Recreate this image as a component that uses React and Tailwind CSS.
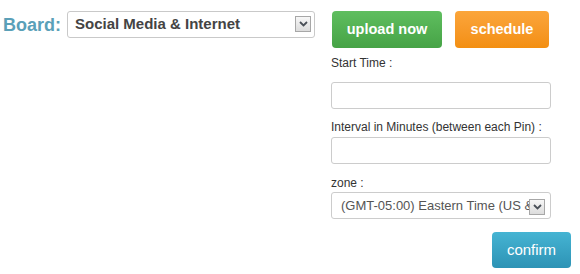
import React from "react";

function DropBox({ className = "" }) {
  return (
    <div
      className={
        "flex h-[16px] w-[16px] shrink-0 items-center justify-center border border-[#a7a7a7] bg-gradient-to-b from-[#f7f7f7] to-[#dcdcdc] " +
        className
      }
    >
      <svg width="9" height="6" viewBox="0 0 9 6">
        <polyline points="1,1 4.5,4.5 8,1" fill="none" stroke="#4a5058" strokeWidth="1.8" />
      </svg>
    </div>
  );
}

export default function App() {
  return (
    <div
      className="flex h-[274px] w-[580px] bg-white pt-[11px]"
      style={{ fontFamily: '"Liberation Sans", Arial, sans-serif' }}
    >
      <div className="flex h-[27px] items-center pl-[3px]">
        <span className="text-[18px] font-bold leading-none text-[#5aa0b8]">Board:</span>
        <div className="ml-[6px] flex h-[27px] w-[248px] items-center justify-between rounded-[3px] border border-[#c9c9c9] pl-[7px] pr-[3px]">
          <span className="text-[15px] font-bold text-[#444]">Social Media &amp; Internet</span>
          <DropBox className="-mt-[2px]" />
        </div>
      </div>
      <div className="ml-[16px] flex w-[240px] flex-col">
        <div className="flex h-[37px] gap-[13px] pl-[1px]">
          <div className="flex w-[110px] items-center justify-center rounded-[4px] bg-gradient-to-b from-[#5fbe5f] to-[#46a346] text-[14.5px] font-bold text-white">
            upload now
          </div>
          <div className="flex w-[94px] items-center justify-center rounded-[4px] bg-gradient-to-b from-[#fba53a] to-[#f38f10] text-[14.5px] font-bold text-white">
            schedule
          </div>
        </div>
        <div className="mt-[8px] h-[15px] text-[12px] leading-[15px] text-[#333]">Start Time :</div>
        <div className="mt-[11px] h-[27px] w-[220px] rounded-[3px] border border-[#cccccc] bg-white"></div>
        <div className="mt-[11px] h-[15px] text-[12px] leading-[15px] text-[#333]">
          Interval in Minutes (between each Pin) :
        </div>
        <div className="mt-[2px] h-[27px] w-[220px] rounded-[3px] border border-[#cccccc] bg-white"></div>
        <div className="mt-[12px] h-[15px] text-[12px] leading-[15px] text-[#333]">zone :</div>
        <div className="mt-[1px] flex h-[27px] w-[220px] items-center rounded-[3px] border border-[#cccccc] bg-white pl-[9px] pr-[5px]">
          <div className="flex-1 overflow-hidden whitespace-nowrap text-[13px] text-[#555]">
            (GMT-05:00) Eastern Time (US &amp; Canada)
          </div>
          <DropBox className="mt-[2px]" />
        </div>
        <div className="mt-[13px] flex justify-end">
          <div className="flex h-[36px] w-[79px] items-center justify-center rounded-[4px] bg-gradient-to-b from-[#45b4d3] to-[#2d93b5] text-[15px] text-white">
            confirm
          </div>
        </div>
      </div>
    </div>
  );
}
